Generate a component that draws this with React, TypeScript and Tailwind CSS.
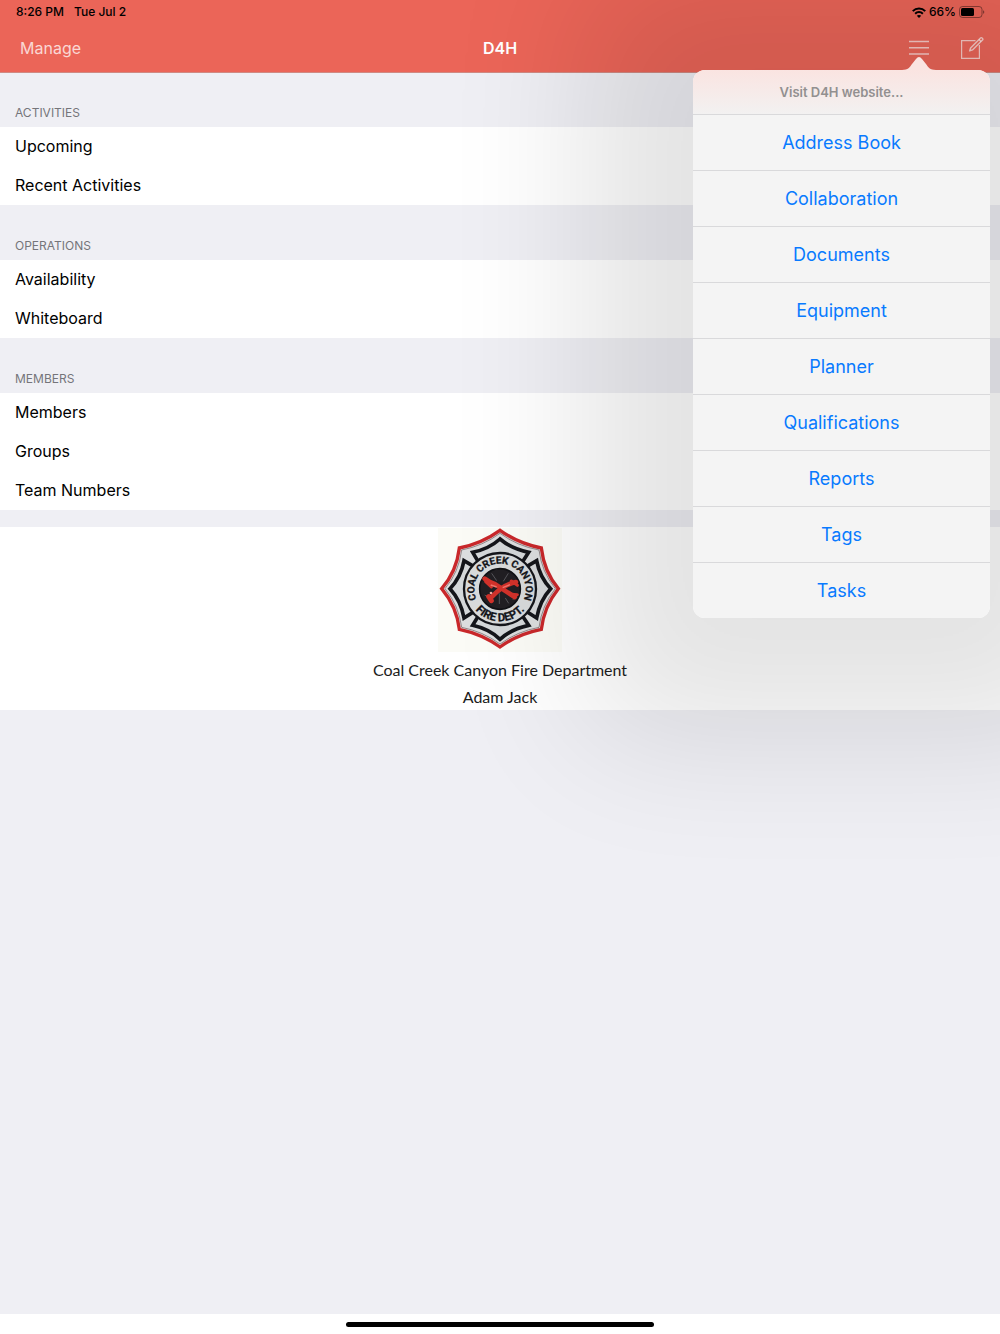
import { useState } from "react";

type Section = { title: string; items: string[] };

const sections: Section[] = [
  { title: "Activities", items: ["Upcoming", "Recent Activities"] },
  { title: "Operations", items: ["Availability", "Whiteboard"] },
  { title: "Members", items: ["Members", "Groups", "Team Numbers"] },
];

const websiteLinks = [
  "Address Book",
  "Collaboration",
  "Documents",
  "Equipment",
  "Planner",
  "Qualifications",
  "Reports",
  "Tags",
  "Tasks",
];

function WifiIcon() {
  return (
    <svg viewBox="0 0 28 22" className="h-[11px] w-[14px]" fill="none" stroke="black" strokeWidth="4" aria-hidden>
      <path d="M1.5 8.2C8.5 1.2 19.5 1.2 26.5 8.2" />
      <path d="M6.3 13.4C10.6 9.1 17.4 9.1 21.7 13.4" />
      <path d="M14 22L9.6 17.4C12 15.2 16 15.2 18.4 17.4Z" fill="black" stroke="none" />
    </svg>
  );
}

function BatteryIcon() {
  return (
    <svg viewBox="0 0 26 12" className="h-3 w-[26px]" aria-hidden>
      <rect x="0.5" y="0.5" width="22.5" height="11" rx="3" fill="none" stroke="black" strokeOpacity="0.4" />
      <rect x="2" y="2" width="13" height="8" rx="1.5" fill="black" />
      <path d="M24.2 4.2C25.6 4.6 25.6 7.4 24.2 7.8Z" fill="black" fillOpacity="0.5" />
    </svg>
  );
}

function ComposeIcon() {
  return (
    <svg viewBox="0 0 24 24" className="size-6" fill="none" stroke="currentColor" strokeWidth="1.2" aria-hidden>
      <path d="M15.5 4.6H1.6V22.4H19.4V9" />
      <path d="M9.6 14.9L10.6 12L20.5 2C21.6 0.9 23.6 2.8 22.5 4L12.5 13.9Z" strokeWidth="1.4" strokeLinejoin="round" />
      <path d="M19 3.5L21 5.5" />
    </svg>
  );
}

// Maltese cross badge with the department name around the hub.
function DepartmentBadge() {
  return (
    <svg viewBox="24 24 372 372" className="size-[124px]" role="img" aria-label="Coal Creek Canyon Fire Dept.">
      <rect x="24" y="24" width="372" height="372" fill="#fbfbf6" />
      <path
        d="M210 31Q264 70 334 84Q342 154 385 206Q342 260 334 328Q264 342 210 381Q156 342 88 328Q80 260 35 206Q80 154 88 84Q156 70 210 31Z"
        fill="#dcdedf"
        stroke="#c9282b"
        strokeWidth="10"
      />
      <path
        d="M210 40Q262 78 327 90Q335 156 376 206Q335 258 327 322Q262 334 210 372Q158 334 95 322Q87 258 45 206Q87 156 95 90Q158 78 210 40Z"
        fill="none"
        stroke="#6d5a5c"
        strokeWidth="2"
      />
      <g fill="#d5d8da" stroke="#15161b" strokeWidth="11">
        <path d="M128 97Q178 86 210 57Q244 86 296 97L272 134H150Z" />
        <path d="M128 316Q178 327 210 358Q244 327 296 316L272 280H150Z" />
        <path d="M102 122Q93 172 60 206Q93 242 102 294L136 272V142Z" />
        <path d="M320 122Q329 172 362 206Q329 242 320 294L286 272V142Z" />
      </g>
      <circle cx="210" cy="207" r="108" fill="#d9dbdc" stroke="#15161b" strokeWidth="7" />
      <circle cx="210" cy="207" r="61" fill="#211f23" stroke="#111216" strokeWidth="5" />
      <g fill="none" stroke="#55555a" strokeWidth="3">
        <path d="M185 160L200 182M235 160L220 184M180 235L164 225M236 250L226 234M208 252V220M248 238L262 232" />
      </g>
      <g stroke="#d2322b" strokeLinecap="round" fill="none">
        <path d="M164 176Q178 187 196 193L254 231" strokeWidth="14" />
        <path d="M258 186Q220 194 186 230" strokeWidth="14" />
        <path d="M167 185L184 201M238 222L262 224M244 183L262 196" strokeWidth="9" />
        <path d="M176 230L184 242" strokeWidth="15" />
      </g>
      <path d="M182 195L200 201M218 203L240 194" stroke="#f0766c" strokeWidth="4" />
      <circle cx="183" cy="219" r="4" fill="#eeaaa2" />
      <defs>
        <path id="badge-top" d="M149 255A77 77 0 1 1 271 255" />
        <path id="badge-bottom" d="M113 207A97 97 0 0 0 307 207" />
      </defs>
      <g
        fill="#15161b"
        stroke="#15161b"
        strokeWidth="0.8"
        fontFamily="Roboto, sans-serif"
        fontWeight="700"
        textAnchor="middle"
      >
        <text fontSize="30">
          <textPath href="#badge-top" startOffset="50%">COAL CREEK CANYON</textPath>
        </text>
        <text fontSize="34">
          <textPath href="#badge-bottom" startOffset="50%">FIRE DEPT.</textPath>
        </text>
      </g>
    </svg>
  );
}

function WebsiteMenu() {
  return (
    <div className="absolute top-[70px] right-[10px] z-10 w-[297px] rounded-xl shadow-[0_10px_140px_110px_rgba(0,0,0,0.11)]">
      <svg viewBox="0 0 34 14" className="absolute right-[54px] bottom-full h-[14px] w-[34px]" aria-hidden>
        <path d="M0 14C6 14 8 11 10 8L14 3Q17 -1 20 3L24 8C26 11 28 14 34 14Z" fill="#fae4e1" />
      </svg>
      <div className="overflow-hidden rounded-xl bg-[#f4f4f4]">
        <h2 className="flex h-11 items-center justify-center bg-linear-to-b from-[#fae4e1] to-[#f2f1f1] pt-px text-[13px] font-semibold text-[#929090]">
          Visit D4H website...
        </h2>
        <nav aria-label="D4H website">
          {websiteLinks.map((label) => (
            <a
              key={label}
              href="#"
              className="flex h-14 items-center justify-center border-t border-[#d9d9db] text-lg text-[#087aff]"
            >
              {label}
            </a>
          ))}
        </nav>
      </div>
    </div>
  );
}

export default function App() {
  const [menuOpen, setMenuOpen] = useState(true);

  return (
    <div className="relative flex min-h-screen flex-col overflow-hidden bg-[#efeff4] font-['Inter',sans-serif] text-black">
      <header className="-mb-px border-b border-[#cf8a83] bg-[#eb6558]">
        <div className="flex h-6 items-center justify-between pr-[15px] pl-4 text-xs font-medium">
          <div className="flex gap-[10px]">
            <span>8:26 PM</span>
            <span>Tue Jul 2</span>
          </div>
          <div className="flex items-center gap-[3px]">
            <WifiIcon />
            <span>66%</span>
            <BatteryIcon />
          </div>
        </div>
        <div className="grid h-12 grid-cols-3 items-center px-4 text-white">
          <button type="button" className="justify-self-start pl-1 text-base text-white/75">
            Manage
          </button>
          <h1 className="text-center text-base font-semibold">D4H</h1>
          <div className="flex items-center gap-[31px] justify-self-end text-white/65">
            <button type="button" aria-label="Menu" aria-expanded={menuOpen} onClick={() => setMenuOpen(!menuOpen)}>
              <svg viewBox="0 0 20 16" className="h-4 w-5" stroke="currentColor" strokeWidth="1.5" aria-hidden>
                <path d="M0 1.5H20M0 7.8H20M0 14H20" />
              </svg>
            </button>
            <button type="button" aria-label="Compose">
              <ComposeIcon />
            </button>
          </div>
        </div>
      </header>

      {menuOpen && <WebsiteMenu />}

      <main className="flex-1">
        {sections.map((section) => (
          <section key={section.title}>
            <h2 className="flex h-[55px] items-end px-[15px] pb-1 text-xs leading-5 text-[#75757a] uppercase">
              {section.title}
            </h2>
            <ul className="bg-white">
              {section.items.map((item) => (
                <li key={item}>
                  <button type="button" className="block h-[39px] w-full px-[15px] pb-0.5 text-left text-base">
                    {item}
                  </button>
                </li>
              ))}
            </ul>
          </section>
        ))}

        <section className="mt-[17px] flex flex-col items-center bg-white pt-px font-['Lato',sans-serif] text-base text-[#1c1c1c]">
          <DepartmentBadge />
          <p className="mt-1 leading-7">Coal Creek Canyon Fire Department</p>
          <p className="leading-[26px]">Adam Jack</p>
        </section>
      </main>

      <footer className="flex h-5 items-center justify-center bg-white">
        <div className="h-[5px] w-[308px] rounded-full bg-black" />
      </footer>
    </div>
  );
}
